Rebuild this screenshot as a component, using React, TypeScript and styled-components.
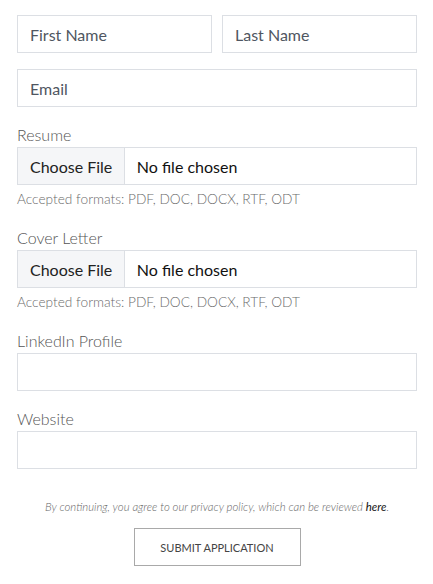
import React, { useState } from 'react'
import styled, { createGlobalStyle } from 'styled-components'

const GlobalStyle = createGlobalStyle`
  body {
    margin: 0;
    background: #fff;
    font-family: Lato, "Open Sans", sans-serif;
  }
  * {
    box-sizing: border-box;
  }
`

const Form = styled.form`
  width: 400px;
  margin: 15px 16px 0 17px;
  display: flex;
  flex-direction: column;
`

const Row = styled.div`
  display: grid;
  grid-template-columns: 1fr 1fr;
  gap: 10px;
  margin-bottom: 16px;
`

const TextInput = styled.input`
  display: block;
  width: 100%;
  height: 38px;
  padding: 0 12px;
  border: 1px solid #dcdfe4;
  border-radius: 0;
  background: #fff;
  font-family: Lato, sans-serif;
  font-size: 16px;
  color: #333;
  outline: none;

  &::placeholder {
    color: #4f5661;
    opacity: 1;
  }
`

const Field = styled.div<{ $gap?: number }>`
  margin-top: ${p => p.$gap ?? 17}px;
`

const Label = styled.label`
  display: block;
  font-weight: 300;
  font-size: 16px;
  line-height: 22px;
  color: #555;
  margin-bottom: 1px;
`

const FileInput = styled.input`
  display: block;
  width: 100%;
  height: 38px;
  border: 1px solid #dcdfe4;
  font-family: Lato, sans-serif;
  font-size: 16px;
  color: #111;
  background: #fff;
  padding: 0;

  &::file-selector-button {
    height: 36px;
    margin: 0 12px 0 0;
    padding: 0 11.5px 0 12px;
    border: none;
    border-right: 1px solid #dcdfe4;
    background: #f5f6f8;
    font-family: Lato, sans-serif;
    font-size: 16px;
    color: #222;
  }
`

const Hint = styled.div`
  margin-top: 5px;
  font-weight: 300;
  font-size: 13.7px;
  line-height: 18px;
  color: #6b6b6b;
`

const Footer = styled.div`
  margin-top: 31px;
  display: flex;
  flex-direction: column;
  align-items: center;
`

const Notice = styled.p`
  margin: 0 0 14px;
  font-size: 11.4px;
  line-height: 14px;
  font-style: italic;
  font-weight: 300;
  color: #666;

  a {
    color: #111;
    font-weight: 400;
    text-decoration: none;
  }
`

const SubmitButton = styled.button`
  width: 167px;
  height: 38px;
  border: 1px solid #a9a9a9;
  background: #fff;
  font-family: Lato, sans-serif;
  font-size: 11px;
  text-transform: uppercase;
  color: #444;
  cursor: pointer;
`

const uploads = [
  { id: 'resume', label: 'Resume' },
  { id: 'coverLetter', label: 'Cover Letter' },
]

const App = () => {
  const [firstName, setFirstName] = useState('')
  const [lastName, setLastName] = useState('')
  const [email, setEmail] = useState('')
  const [linkedin, setLinkedin] = useState('')
  const [website, setWebsite] = useState('')

  return (
    <>
      <GlobalStyle />
      <Form onSubmit={e => e.preventDefault()}>
        <Row>
          <TextInput type="text" placeholder="First Name" value={firstName} onChange={e => setFirstName(e.target.value)} />
          <TextInput type="text" placeholder="Last Name" value={lastName} onChange={e => setLastName(e.target.value)} />
        </Row>
        <TextInput type="email" placeholder="Email" value={email} onChange={e => setEmail(e.target.value)} />

        {uploads.map((u, i) => (
          <Field key={u.id} $gap={i === 0 ? 17 : 19}>
            <Label htmlFor={u.id}>{u.label}</Label>
            <FileInput type="file" id={u.id} name={u.id} accept=".pdf,.doc,.docx,.rtf,.odt" />
            <Hint>Accepted formats: PDF, DOC, DOCX, RTF, ODT</Hint>
          </Field>
        ))}

        <Field $gap={19}>
          <Label htmlFor="linkedin">LinkedIn Profile</Label>
          <TextInput type="url" id="linkedin" value={linkedin} onChange={e => setLinkedin(e.target.value)} />
        </Field>
        <Field $gap={17}>
          <Label htmlFor="website">Website</Label>
          <TextInput type="url" id="website" value={website} onChange={e => setWebsite(e.target.value)} />
        </Field>

        <Footer>
          <Notice>
            By continuing, you agree to our privacy policy, which can be reviewed <a href="#">here</a>.
          </Notice>
          <SubmitButton type="submit">Submit Application</SubmitButton>
        </Footer>
      </Form>
    </>
  )
}

export default App
